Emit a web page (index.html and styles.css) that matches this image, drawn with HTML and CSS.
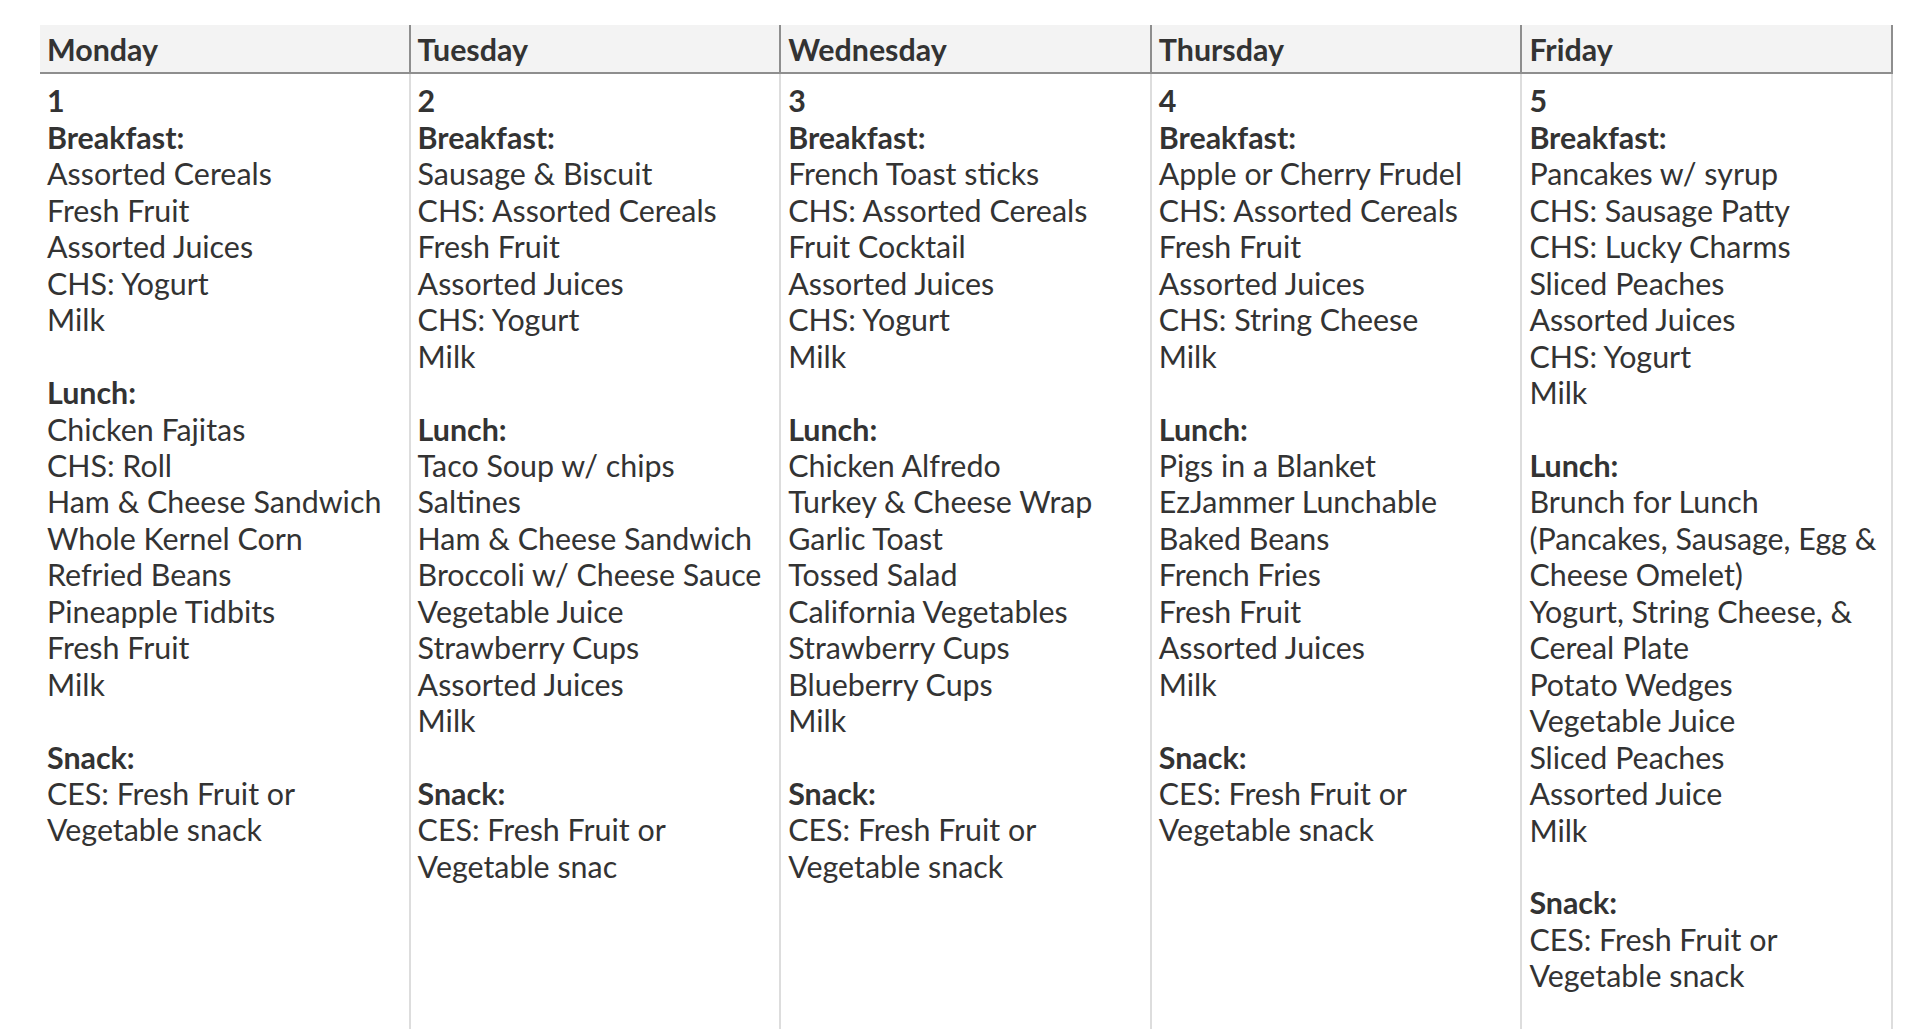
FILE: index.html
```html
<!DOCTYPE html>
<html lang="en">
<head>
<meta charset="utf-8">
<title>Menu</title>
<link rel="stylesheet" href="styles.css">
</head>
<body>
<div class="page">
  <div class="menu">
    <div class="head">Monday</div>
    <div class="head">Tuesday</div>
    <div class="head">Wednesday</div>
    <div class="head">Thursday</div>
    <div class="head">Friday</div>

    <div class="day">
      <div class="num">1</div>
      <div class="meal">
        <div class="label">Breakfast:</div>
        <div>Assorted Cereals</div>
        <div>Fresh Fruit</div>
        <div>Assorted Juices</div>
        <div>CHS: Yogurt</div>
        <div>Milk</div>
      </div>
      <div class="meal">
        <div class="label">Lunch:</div>
        <div>Chicken Fajitas</div>
        <div>CHS: Roll</div>
        <div>Ham &amp; Cheese Sandwich</div>
        <div>Whole Kernel Corn</div>
        <div>Refried Beans</div>
        <div>Pineapple Tidbits</div>
        <div>Fresh Fruit</div>
        <div>Milk</div>
      </div>
      <div class="meal">
        <div class="label">Snack:</div>
        <div>CES: Fresh Fruit or Vegetable snack</div>
      </div>
    </div>

    <div class="day">
      <div class="num">2</div>
      <div class="meal">
        <div class="label">Breakfast:</div>
        <div>Sausage &amp; Biscuit</div>
        <div>CHS: Assorted Cereals</div>
        <div>Fresh Fruit</div>
        <div>Assorted Juices</div>
        <div>CHS: Yogurt</div>
        <div>Milk</div>
      </div>
      <div class="meal">
        <div class="label">Lunch:</div>
        <div>Taco Soup w/ chips</div>
        <div>Saltines</div>
        <div>Ham &amp; Cheese Sandwich</div>
        <div>Broccoli w/ Cheese Sauce</div>
        <div>Vegetable Juice</div>
        <div>Strawberry Cups</div>
        <div>Assorted Juices</div>
        <div>Milk</div>
      </div>
      <div class="meal">
        <div class="label">Snack:</div>
        <div>CES: Fresh Fruit or Vegetable snac</div>
      </div>
    </div>

    <div class="day">
      <div class="num">3</div>
      <div class="meal">
        <div class="label">Breakfast:</div>
        <div>French Toast sticks</div>
        <div>CHS: Assorted Cereals</div>
        <div>Fruit Cocktail</div>
        <div>Assorted Juices</div>
        <div>CHS: Yogurt</div>
        <div>Milk</div>
      </div>
      <div class="meal">
        <div class="label">Lunch:</div>
        <div>Chicken Alfredo</div>
        <div>Turkey &amp; Cheese Wrap</div>
        <div>Garlic Toast</div>
        <div>Tossed Salad</div>
        <div>California Vegetables</div>
        <div>Strawberry Cups</div>
        <div>Blueberry Cups</div>
        <div>Milk</div>
      </div>
      <div class="meal">
        <div class="label">Snack:</div>
        <div>CES: Fresh Fruit or Vegetable snack</div>
      </div>
    </div>

    <div class="day">
      <div class="num">4</div>
      <div class="meal">
        <div class="label">Breakfast:</div>
        <div>Apple or Cherry Frudel</div>
        <div>CHS: Assorted Cereals</div>
        <div>Fresh Fruit</div>
        <div>Assorted Juices</div>
        <div>CHS: String Cheese</div>
        <div>Milk</div>
      </div>
      <div class="meal">
        <div class="label">Lunch:</div>
        <div>Pigs in a Blanket</div>
        <div>EzJammer Lunchable</div>
        <div>Baked Beans</div>
        <div>French Fries</div>
        <div>Fresh Fruit</div>
        <div>Assorted Juices</div>
        <div>Milk</div>
      </div>
      <div class="meal">
        <div class="label">Snack:</div>
        <div>CES: Fresh Fruit or Vegetable snack</div>
      </div>
    </div>

    <div class="day">
      <div class="num">5</div>
      <div class="meal">
        <div class="label">Breakfast:</div>
        <div>Pancakes w/ syrup</div>
        <div>CHS: Sausage Patty</div>
        <div>CHS: Lucky Charms</div>
        <div>Sliced Peaches</div>
        <div>Assorted Juices</div>
        <div>CHS: Yogurt</div>
        <div>Milk</div>
      </div>
      <div class="meal">
        <div class="label">Lunch:</div>
        <div>Brunch for Lunch</div>
        <div>(Pancakes, Sausage, Egg &amp; Cheese Omelet)</div>
        <div>Yogurt, String Cheese, &amp; Cereal Plate</div>
        <div>Potato Wedges</div>
        <div>Vegetable Juice</div>
        <div>Sliced Peaches</div>
        <div>Assorted Juice</div>
        <div>Milk</div>
      </div>
      <div class="meal">
        <div class="label">Snack:</div>
        <div>CES: Fresh Fruit or Vegetable snack</div>
      </div>
    </div>
  </div>
</div>
</body>
</html>
```

FILE: styles.css
```css
html, body {
  margin: 0;
  padding: 0;
  background: #ffffff;
}

body {
  font-family: Lato, "Open Sans", "Liberation Sans", sans-serif;
  font-size: 30.4px;
  line-height: 36.45px;
  color: #333333;
}

.page {
  height: 1029px;
  overflow: hidden;
  padding: 25px 27px 0 40px;
  box-sizing: border-box;
}

.menu {
  display: grid;
  grid-template-columns: repeat(5, 1fr);
}

.head {
  background: #f3f3f3;
  font-weight: 700;
  padding: 6px 6px 5px 7px;
  border-right: 2px solid #8e8e8e;
  border-bottom: 2px solid #8e8e8e;
}

.day {
  padding: 8px 6px 0 7px;
  border-right: 2px solid #dddddd;
  min-height: 1100px;
}

.num,
.label {
  font-weight: 700;
}

.meal + .meal {
  margin-top: 36.45px;
}
```
